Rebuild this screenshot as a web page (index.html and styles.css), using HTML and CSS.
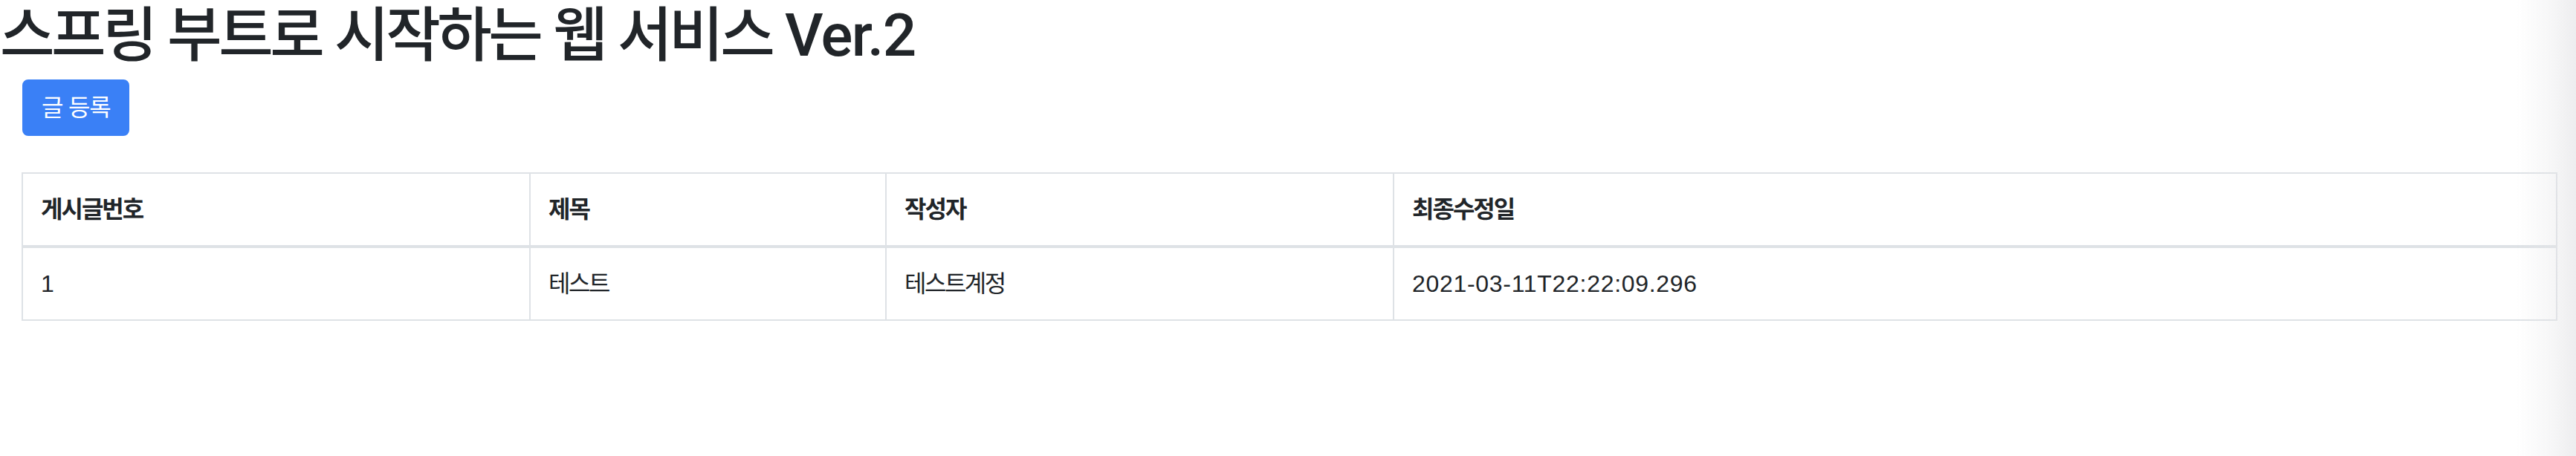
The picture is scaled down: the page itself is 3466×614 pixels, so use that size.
FILE: index.html
```html
<!DOCTYPE html>
<html lang="ko">
<head>
<meta charset="utf-8">
<title>스프링 부트로 시작하는 웹 서비스 Ver.2</title>
<link rel="stylesheet" href="styles.css">
</head>
<body>
<h1 class="title">스프링 부트로 시작하는 웹 서비스 <span class="title-ver">Ver.2</span></h1>
<div class="content">
  <div class="actions">
    <a class="btn-primary" href="#">글 등록</a>
  </div>
  <table class="board">
    <colgroup>
      <col class="c-no">
      <col class="c-title">
      <col class="c-author">
      <col class="c-date">
    </colgroup>
    <thead>
      <tr>
        <th>게시글번호</th>
        <th>제목</th>
        <th>작성자</th>
        <th>최종수정일</th>
      </tr>
    </thead>
    <tbody>
      <tr>
        <td class="num">1</td>
        <td>테스트</td>
        <td>테스트계정</td>
        <td class="num">2021-03-11T22:22:09.296</td>
      </tr>
    </tbody>
  </table>
</div>
<div class="edge-shade"></div>
</body>
</html>
```

FILE: styles.css
```css
html, body {
  margin: 0;
  padding: 0;
  background: #ffffff;
}

body {
  font-family: "Liberation Sans", "Noto Sans CJK KR", sans-serif;
  color: #212529;
  font-size: 32px;
  line-height: 48px;
  min-height: 614px;
}

.title {
  margin: 0 0 11px 0;
  font-size: 80px;
  line-height: 96px;
  font-weight: 500;
  letter-spacing: -4.5px;
  white-space: nowrap;
}

.title-ver {
  font-family: Roboto, "Liberation Sans", sans-serif;
  font-weight: 500;
  letter-spacing: -1.5px;
}

.content {
  padding: 0 25px 0 29px;
}

.actions {
  display: flex;
  padding-left: 1px;
  margin-bottom: 49px;
}

.btn-primary {
  display: inline-block;
  box-sizing: border-box;
  height: 76px;
  padding: 12px 24px;
  border: 2px solid #3a80f6;
  border-radius: 8px;
  background: #3a80f6;
  color: #ffffff;
  font-size: 32px;
  line-height: 48px;
  letter-spacing: -1.2px;
  text-decoration: none;
  white-space: nowrap;
}

.board {
  width: 3412px;
  border-collapse: collapse;
  border: 2px solid #dee2e6;
}

.c-no { width: 683px; }
.c-title { width: 479px; }
.c-author { width: 683px; }

.board th,
.board td {
  border: 2px solid #dee2e6;
  padding: 24px;
  text-align: left;
  vertical-align: top;
  line-height: 48px;
  font-size: 32px;
  letter-spacing: -2.5px;
}

.board th {
  font-weight: 700;
  border-bottom-width: 4px;
  letter-spacing: -2px;
}

.board td.num {
  letter-spacing: 0.7px;
}

.edge-shade {
  position: fixed;
  top: 0;
  right: 0;
  width: 80px;
  height: 100%;
  background: linear-gradient(to right, rgba(230, 230, 232, 0) 0%, rgba(230, 230, 232, 0.35) 60%, rgba(225, 225, 228, 0.6) 100%);
  pointer-events: none;
}
```
